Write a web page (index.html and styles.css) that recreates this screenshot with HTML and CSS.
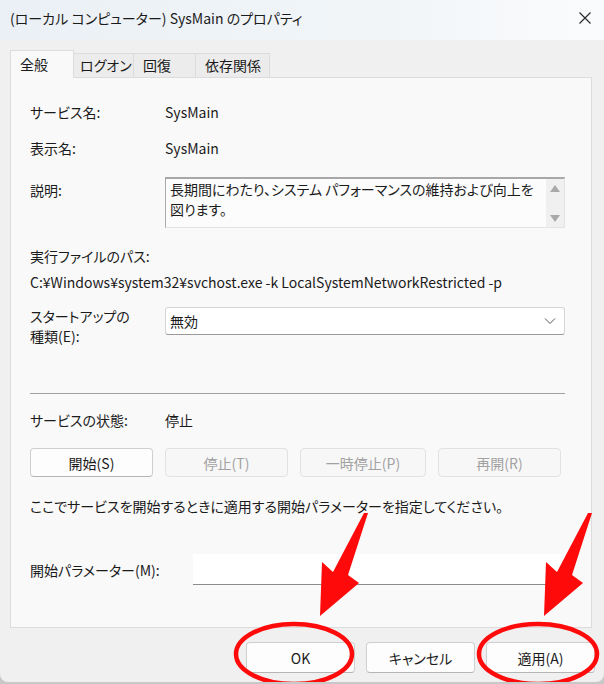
FILE: index.html
```html
<!DOCTYPE html>
<html lang="ja">
<head>
    <meta charset="UTF-8">
    <title>SysMain のプロパティ</title>
    <link rel="stylesheet" href="styles.css">
</head>
<body>
    <div class="window">
        <div class="titlebar">
            <span class="title">(ローカル コンピューター) SysMain のプロパティ</span>
            <svg class="close" width="14" height="14" viewBox="0 0 14 14">
                <path d="M1.5 1.5 L12.5 12.5 M12.5 1.5 L1.5 12.5" stroke="#2b2b2b" stroke-width="1.2" fill="none"/>
            </svg>
        </div>

        <div class="tabs">
            <div class="tab active">全般</div>
            <div class="tab">ログオン</div>
            <div class="tab">回復</div>
            <div class="tab">依存関係</div>
        </div>

        <div class="panel">
            <div class="row">
                <span class="label">サービス名:</span>
                <span>SysMain</span>
            </div>
            <div class="row r-display">
                <span class="label">表示名:</span>
                <span>SysMain</span>
            </div>
            <div class="row r-desc">
                <span class="label">説明:</span>
                <div class="descbox">
                    <div class="desctext">長期間にわたり、システム パフォーマンスの維持および向上を図ります。</div>
                    <div class="scroll">
                        <span class="arrow up"></span>
                        <span class="arrow down"></span>
                    </div>
                </div>
            </div>
            <div class="line r-pathlabel">実行ファイルのパス:</div>
            <div class="line r-path">C:¥Windows¥system32¥svchost.exe -k LocalSystemNetworkRestricted -p</div>
            <div class="row r-startup">
                <span class="label">スタートアップの<br>種類(E):</span>
                <div class="combo">
                    <span>無効</span>
                    <svg width="12" height="8" viewBox="0 0 12 8">
                        <path d="M1 1.5 L6 6.5 L11 1.5" stroke="#555" stroke-width="1" fill="none"/>
                    </svg>
                </div>
            </div>
            <hr class="sep">
            <div class="row r-status">
                <span class="label">サービスの状態:</span>
                <span>停止</span>
            </div>
            <div class="svc-buttons">
                <button class="btn">開始(S)</button>
                <button class="btn" disabled>停止(T)</button>
                <button class="btn" disabled>一時停止(P)</button>
                <button class="btn" disabled>再開(R)</button>
            </div>
            <div class="line r-hint">ここでサービスを開始するときに適用する開始パラメーターを指定してください。</div>
            <div class="row r-param">
                <span class="label wide">開始パラメーター(M):</span>
                <div class="input"></div>
            </div>
        </div>

        <div class="footer">
            <button class="btn dlg">OK</button>
            <button class="btn dlg">キャンセル</button>
            <button class="btn dlg">適用(A)</button>
        </div>

        <!-- red annotation marks over the dialog -->
        <svg class="marks" width="604" height="684" viewBox="0 0 604 684">
            <g fill="#ff0a0a">
                <polygon points="368,513 348,575 359,583 320,616 322,562 333,572 364,513"/>
                <polygon points="368,513 348,575 359,583 320,616 322,562 333,572 364,513" transform="translate(224,0)"/>
            </g>
            <g fill="none" stroke="#ff0a0a" stroke-width="4.5">
                <ellipse cx="294" cy="654" rx="58" ry="30"/>
                <ellipse cx="538" cy="654" rx="59" ry="30"/>
            </g>
        </svg>
    </div>
</body>
</html>
```

FILE: styles.css
```css
body {
    margin: 0;
    background: #c8c8c8;
    font-family: "Noto Sans CJK JP", "Noto Sans", sans-serif;
    font-feature-settings: "palt";
    font-size: 14px;
    color: #1b1b1b;
}
.window {
    position: relative;
    width: 604px;
    height: 682px;
    background: #f0f0f0;
    border-radius: 0 0 8px 8px;
    overflow: hidden;
}
.titlebar {
    height: 40px;
    display: flex;
    align-items: center;
    justify-content: space-between;
    padding: 0 12px 0 10px;
    background: linear-gradient(90deg, #eaf0f5, #f1f5f8 60%, #fafbfc);
    box-sizing: border-box;
}
.title {
    font-size: 14px;
    margin-top: -4px;
}
.close {
    margin-top: -4px;
}
.tabs {
    display: flex;
    align-items: flex-end;
    margin: 10px 0 0 10px;
    height: 27px;
}
.tab {
    height: 24px;
    line-height: 23px;
    padding: 0 0 0 6px;
    white-space: nowrap;
    background: #ececec;
    border: 1px solid #dcdcdc;
    border-bottom: none;
    border-left: none;
    box-sizing: border-box;
    font-size: 14px;
}
.tab:nth-child(2) { width: 60px; }
.tab:nth-child(3) { width: 62px; padding-left: 9px; }
.tab:nth-child(4) { width: 74px; padding-left: 9px; }
.tab.active {
    width: 64px;
    height: 28px;
    line-height: 26px;
    padding-left: 9px;
    margin-bottom: -1px;
    background: #f9f9f9;
    border-left: 1px solid #dcdcdc;
    position: relative;
    z-index: 1;
}
.panel {
    margin: 0 12px 0 10px;
    height: 551px;
    box-sizing: border-box;
    background: #f9f9f9;
    border: 1px solid #dcdcdc;
    padding: 24px 26px 0 19px;
}
.row {
    display: flex;
    align-items: center;
    line-height: 20px;
}
.label {
    width: 135px;
    flex-shrink: 0;
}
.label.wide {
    width: 163px;
}
.line {
    line-height: 20px;
}
.r-display { margin-top: 16px; }
.r-desc {
    margin-top: 19px;
    align-items: flex-start;
}
.r-desc .label { margin-top: 3px; }
.descbox {
    flex: 1;
    height: 51px;
    display: flex;
    background: #fcfcfc;
    border: 1px solid #e3e3e3;
    border-top: 2px solid #a8a8a8;
    border-left: 1px solid #a8a8a8;
    box-sizing: border-box;
}
.desctext {
    flex: 1;
    padding: 0 4px;
    line-height: 20px;
}
.scroll {
    width: 18px;
    background: #f0f0f0;
    display: flex;
    flex-direction: column;
    justify-content: space-between;
    align-items: center;
    padding: 6px 0 5px;
}
.arrow {
    width: 0;
    height: 0;
    border-left: 5px solid transparent;
    border-right: 5px solid transparent;
}
.arrow.up { border-bottom: 7px solid #a9a9a9; }
.arrow.down { border-top: 7px solid #a9a9a9; }
.r-pathlabel { margin-top: 18px; }
.r-path { margin-top: 6px; }
.r-startup {
    margin-top: 14px;
    align-items: flex-start;
}
.combo {
    flex: 1;
    height: 28px;
    margin-top: 1px;
    display: flex;
    align-items: center;
    justify-content: space-between;
    padding: 0 8px 0 4px;
    background: #ffffff;
    border: 1px solid #d6d6d6;
    border-bottom-color: #9a9a9a;
    border-radius: 3px;
    box-sizing: border-box;
}
.sep {
    margin: 47px 0 0 0;
    border: none;
    border-top: 1px solid #a0a0a0;
    height: 0;
}
.r-status { margin-top: 16px; }
.svc-buttons {
    display: flex;
    gap: 12px;
    margin-top: 18px;
}
.btn {
    font-family: inherit;
    font-feature-settings: "palt";
    font-size: 14px;
    color: #1b1b1b;
    height: 29px;
    width: 123px;
    padding: 0;
    background: #fdfdfd;
    border: 1px solid #cfcfcf;
    border-bottom-color: #b5b5b5;
    border-radius: 4px;
}
.svc-buttons .btn:nth-child(3) { width: 126px; }
.btn:disabled {
    background: #f7f7f7;
    border-color: #e2e2e2;
    color: #a2a2a2;
}
.r-hint { margin-top: 19px; }
.r-param { margin-top: 38px; }
.input {
    flex: 1;
    height: 31px;
    background: #ffffff;
    border-bottom: 1px solid #8c8c8c;
    box-sizing: border-box;
}
.footer {
    display: flex;
    justify-content: flex-end;
    gap: 11px;
    padding: 14px 9px 0 0;
}
.btn.dlg {
    width: 109px;
    height: 31px;
}
.marks {
    position: absolute;
    top: 0;
    left: 0;
    pointer-events: none;
}
```
